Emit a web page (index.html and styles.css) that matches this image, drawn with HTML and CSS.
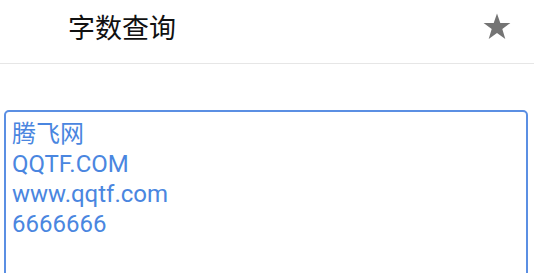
FILE: index.html
```html
<!DOCTYPE html>
<html lang="zh">
<head>
  <meta charset="UTF-8">
  <title>字数查询</title>
  <link rel="stylesheet" href="styles.css">
</head>
<body>

  <div class="header">
    <div class="title">字数查询</div>
    <button class="fav" aria-label="收藏">
      <svg width="30" height="30" viewBox="0 0 30 30">
        <polygon points="15,1.5 18.3,11 28.4,11 20.3,17 23.3,27 15,21 6.7,27 9.7,17 1.6,11 11.7,11" fill="#747474"/>
      </svg>
    </button>
  </div>

  <div class="content">
    <textarea class="input" spellcheck="false">腾飞网
QQTF.COM
www.qqtf.com
6666666</textarea>
  </div>

</body>
</html>
```

FILE: styles.css
```css
    :root {
      --line-color: #e6e6e6;
      --input-border: #5b8fe3;
      --input-text: #4a86e0;
      --star-color: #747474;
    }

    body {
      margin: 0;
      height: 100vh;
      background: white;
      font-family: Roboto, 'Noto Sans CJK SC', sans-serif;
      overflow: hidden;
    }

    .header {
      display: flex;
      align-items: center;
      justify-content: space-between;
      height: 63px;
      border-bottom: 1px solid var(--line-color);
      padding: 0 22px 0 68px;
    }

    .title {
      font-size: 27px;
      color: #111;
      margin-top: -10px;
    }

    .fav {
      border: none;
      background: none;
      padding: 0;
      margin-top: -10px;
      display: flex;
      cursor: pointer;
    }

    .content {
      padding: 46px 6px 0 4px;
    }

    .input {
      display: block;
      box-sizing: border-box;
      width: 100%;
      height: 180px;
      margin: 0;
      border: 2px solid var(--input-border);
      border-radius: 5px;
      padding: 7px 6px;
      font-family: Roboto, 'Noto Sans CJK SC', sans-serif;
      font-size: 24px;
      line-height: 30px;
      color: var(--input-text);
      resize: none;
      outline: none;
    }
```
